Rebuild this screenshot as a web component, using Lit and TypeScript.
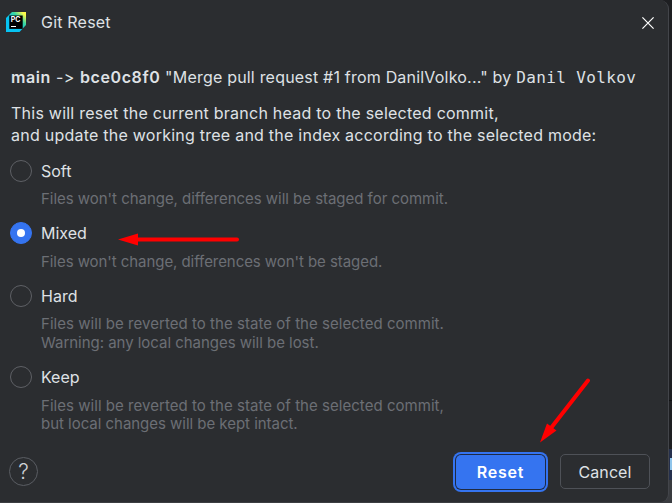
import { LitElement, html, css, svg, nothing } from "lit";
import { customElement, state } from "lit/decorators.js";

const MODES = [
  { id: "soft", label: "Soft", hints: ["Files won't change, differences will be staged for commit."] },
  { id: "mixed", label: "Mixed", hints: ["Files won't change, differences won't be staged."] },
  { id: "hard", label: "Hard", hints: ["Files will be reverted to the state of the selected commit.", "Warning: any local changes will be lost."] },
  { id: "keep", label: "Keep", hints: ["Files will be reverted to the state of the selected commit,", "but local changes will be kept intact."] },
];

@customElement("app-root")
export class AppRoot extends LitElement {
  @state() private mode = "mixed";

  static styles = css`
    :host { display: block; position: relative; width: 672px; height: 503px; overflow: hidden; background: #1e1f22; font-family: Inter, "Liberation Sans", sans-serif; font-size: 16px; color: #dfe1e5; font-feature-settings: "calt" 0; }
    * { box-sizing: border-box; }
    .backdrop { position: absolute; right: 0; top: 0; width: 14px; height: 503px; display: flex; flex-direction: column; }
    .pane { height: 401px; border-bottom: 1px solid #101113; }
    .pane.low { height: 48px; border: 0; }
    .pick { height: 31px; background: #25304d; padding: 9px 0 0 12px; }
    .glyph { display: block; width: 2px; height: 12px; background: #8fc4ea; }
    .rest { flex: 1; background: #393b3f; }
    .dialog { position: relative; width: 669px; height: 503px; background: #2b2d30; border-right: 1px solid #43454a; border-bottom: 1px solid #3c3e42; border-radius: 0 9px 9px 0; display: flex; flex-direction: column; }
    .title { display: flex; align-items: center; height: 44px; padding: 0 14px 0 6px; }
    .logo { display: block; width: 20px; height: 20px; margin-right: 15px; }
    .name { flex: 1; letter-spacing: 0.2px; }
    .close { display: block; width: 12px; height: 12px; margin-top: 2px; }
    .head { padding-left: 11px; margin-top: 22px; height: 22px; line-height: 22px; white-space: pre; display: flex; align-items: baseline; }
    .b { font-weight: 600; letter-spacing: 0.6px; }
    .msg { letter-spacing: 0.2px; }
    .arrow { letter-spacing: 0.5px; }
    .mono { font-family: "DejaVu Sans Mono", monospace; letter-spacing: 0.37px; }
    .desc { padding-left: 11px; margin-top: 14px; line-height: 22px; white-space: pre; letter-spacing: 0.24px; }
    .modes { margin-top: 14px; padding-left: 10px; display: flex; flex-direction: column; gap: 14px; }
    .row { display: flex; align-items: center; height: 22px; gap: 9px; }
    .mode.mixed { margin-top: -0.6px; padding-bottom: 0.6px; }
    .radio { width: 22px; height: 22px; border-radius: 50%; border: 1px solid #5e6065; display: flex; align-items: center; justify-content: center; }
    .radio.on { background: #3574f0; border-color: #3574f0; }
    .dot { width: 8px; height: 8px; border-radius: 50%; background: #fff; }
    .hint { margin: 8px 0 0 31px; font-size: 15px; line-height: 18.5px; color: #6c6f75; white-space: pre; letter-spacing: -0.03px; }
    .mixed .hint { margin-top: 9px; margin-bottom: -1px; letter-spacing: -0.06px; }
    .keep .hint { margin-top: 8.6px; margin-bottom: -0.6px; }
    .hard .line:first-child, .keep .line:first-child { letter-spacing: 0.04px; }
    .foot { display: flex; align-items: center; margin-top: auto; height: 61px; padding: 0 18px 0 9px; }
    .help { width: 29px; height: 29px; border-radius: 50%; border: 1px solid #5a5d63; display: flex; align-items: center; justify-content: center; font-size: 21px; font-weight: 300; color: #ced0d6; margin-right: auto; }
    .btn { border-radius: 5px; display: flex; align-items: center; justify-content: center; }
    .ok { width: 89px; height: 34px; background: #3574f0; box-shadow: 0 0 0 1px #1e2a44, 0 0 0 3px #3574f0; color: #fff; font-weight: 600; letter-spacing: 0.8px; margin-right: 15px; }
    .cancel { width: 90px; height: 35px; border: 1px solid #4e5157; letter-spacing: 0.1px; }
    .marks { position: absolute; left: 0; top: 0; width: 672px; height: 503px; pointer-events: none; }
  `;

  private logo() {
    return html`<svg class="logo" viewBox="0 0 20 20">
      <defs><linearGradient id="g" x1="0" y1="1" x2="1" y2="0"><stop offset="0.4" stop-color="#07c3f2"/><stop offset="0.68" stop-color="#3bd6a0"/><stop offset="0.9" stop-color="#fcf84a"/></linearGradient></defs>
      <path d="M0 6L6 0H20V13L13.500 20H0Z" fill="url(#g)"/>
      <rect x="3.300" y="3.500" width="13.400" height="13.400" fill="#000"/>
      <text x="4.700" y="10" font-size="7" font-weight="700" fill="#fff" font-family="Inter, sans-serif">PC</text>
      <rect x="5" y="14" width="5" height="1" fill="#fff"/>
    </svg>`;
  }

  render() {
    return html`
      <div class="backdrop"><div class="pane"></div><div class="pane low"></div><div class="pick"><i class="glyph"></i></div><div class="rest"></div></div>
      <div class="dialog">
        <div class="title">${this.logo()}<span class="name">Git Reset</span>
          <svg class="close" viewBox="0 0 12 12"><path d="M.4 .4L11.600 11.600M11.600 .4L.4 11.600" stroke="#fff" stroke-width="1.200"/></svg>
        </div>
        <div class="head"><span class="b">main</span><span class="arrow"> -&gt; </span><span class="b">bce0c8f0</span><span class="msg"> "Merge pull request #1 from DanilVolko..." by </span><span class="mono">Danil Volkov</span></div>
        <div class="desc"><div>This will reset the current branch head to the selected commit,</div><div>and update the working tree and the index according to the selected mode:</div></div>
        <div class="modes">
          ${MODES.map((m) => html`<div class="mode ${m.id}" @click=${() => (this.mode = m.id)}>
            <div class="row"><span class="radio ${this.mode === m.id ? "on" : ""}">${this.mode === m.id ? html`<i class="dot"></i>` : nothing}</span><span>${m.label}</span></div>
            <div class="hint">${m.hints.map((h) => html`<div class="line">${h}</div>`)}</div>
          </div>`)}
        </div>
        <div class="foot"><span class="help">?</span><span class="btn ok">Reset</span><span class="btn cancel">Cancel</span></div>
      </div>
      <svg class="marks" viewBox="0 0 672 503">${svg`
        <path d="M134 239.500H237" stroke="#f00" stroke-width="4" stroke-linecap="round"/><path d="M118 239.500L138 233.500V245.500Z" fill="#f00"/>
        <path d="M588 380.500L551 428" stroke="#f00" stroke-width="4" stroke-linecap="round"/><path d="M540 442.500L547 423.500L556.500 430.500Z" fill="#f00"/>`}
      </svg>`;
  }
}
